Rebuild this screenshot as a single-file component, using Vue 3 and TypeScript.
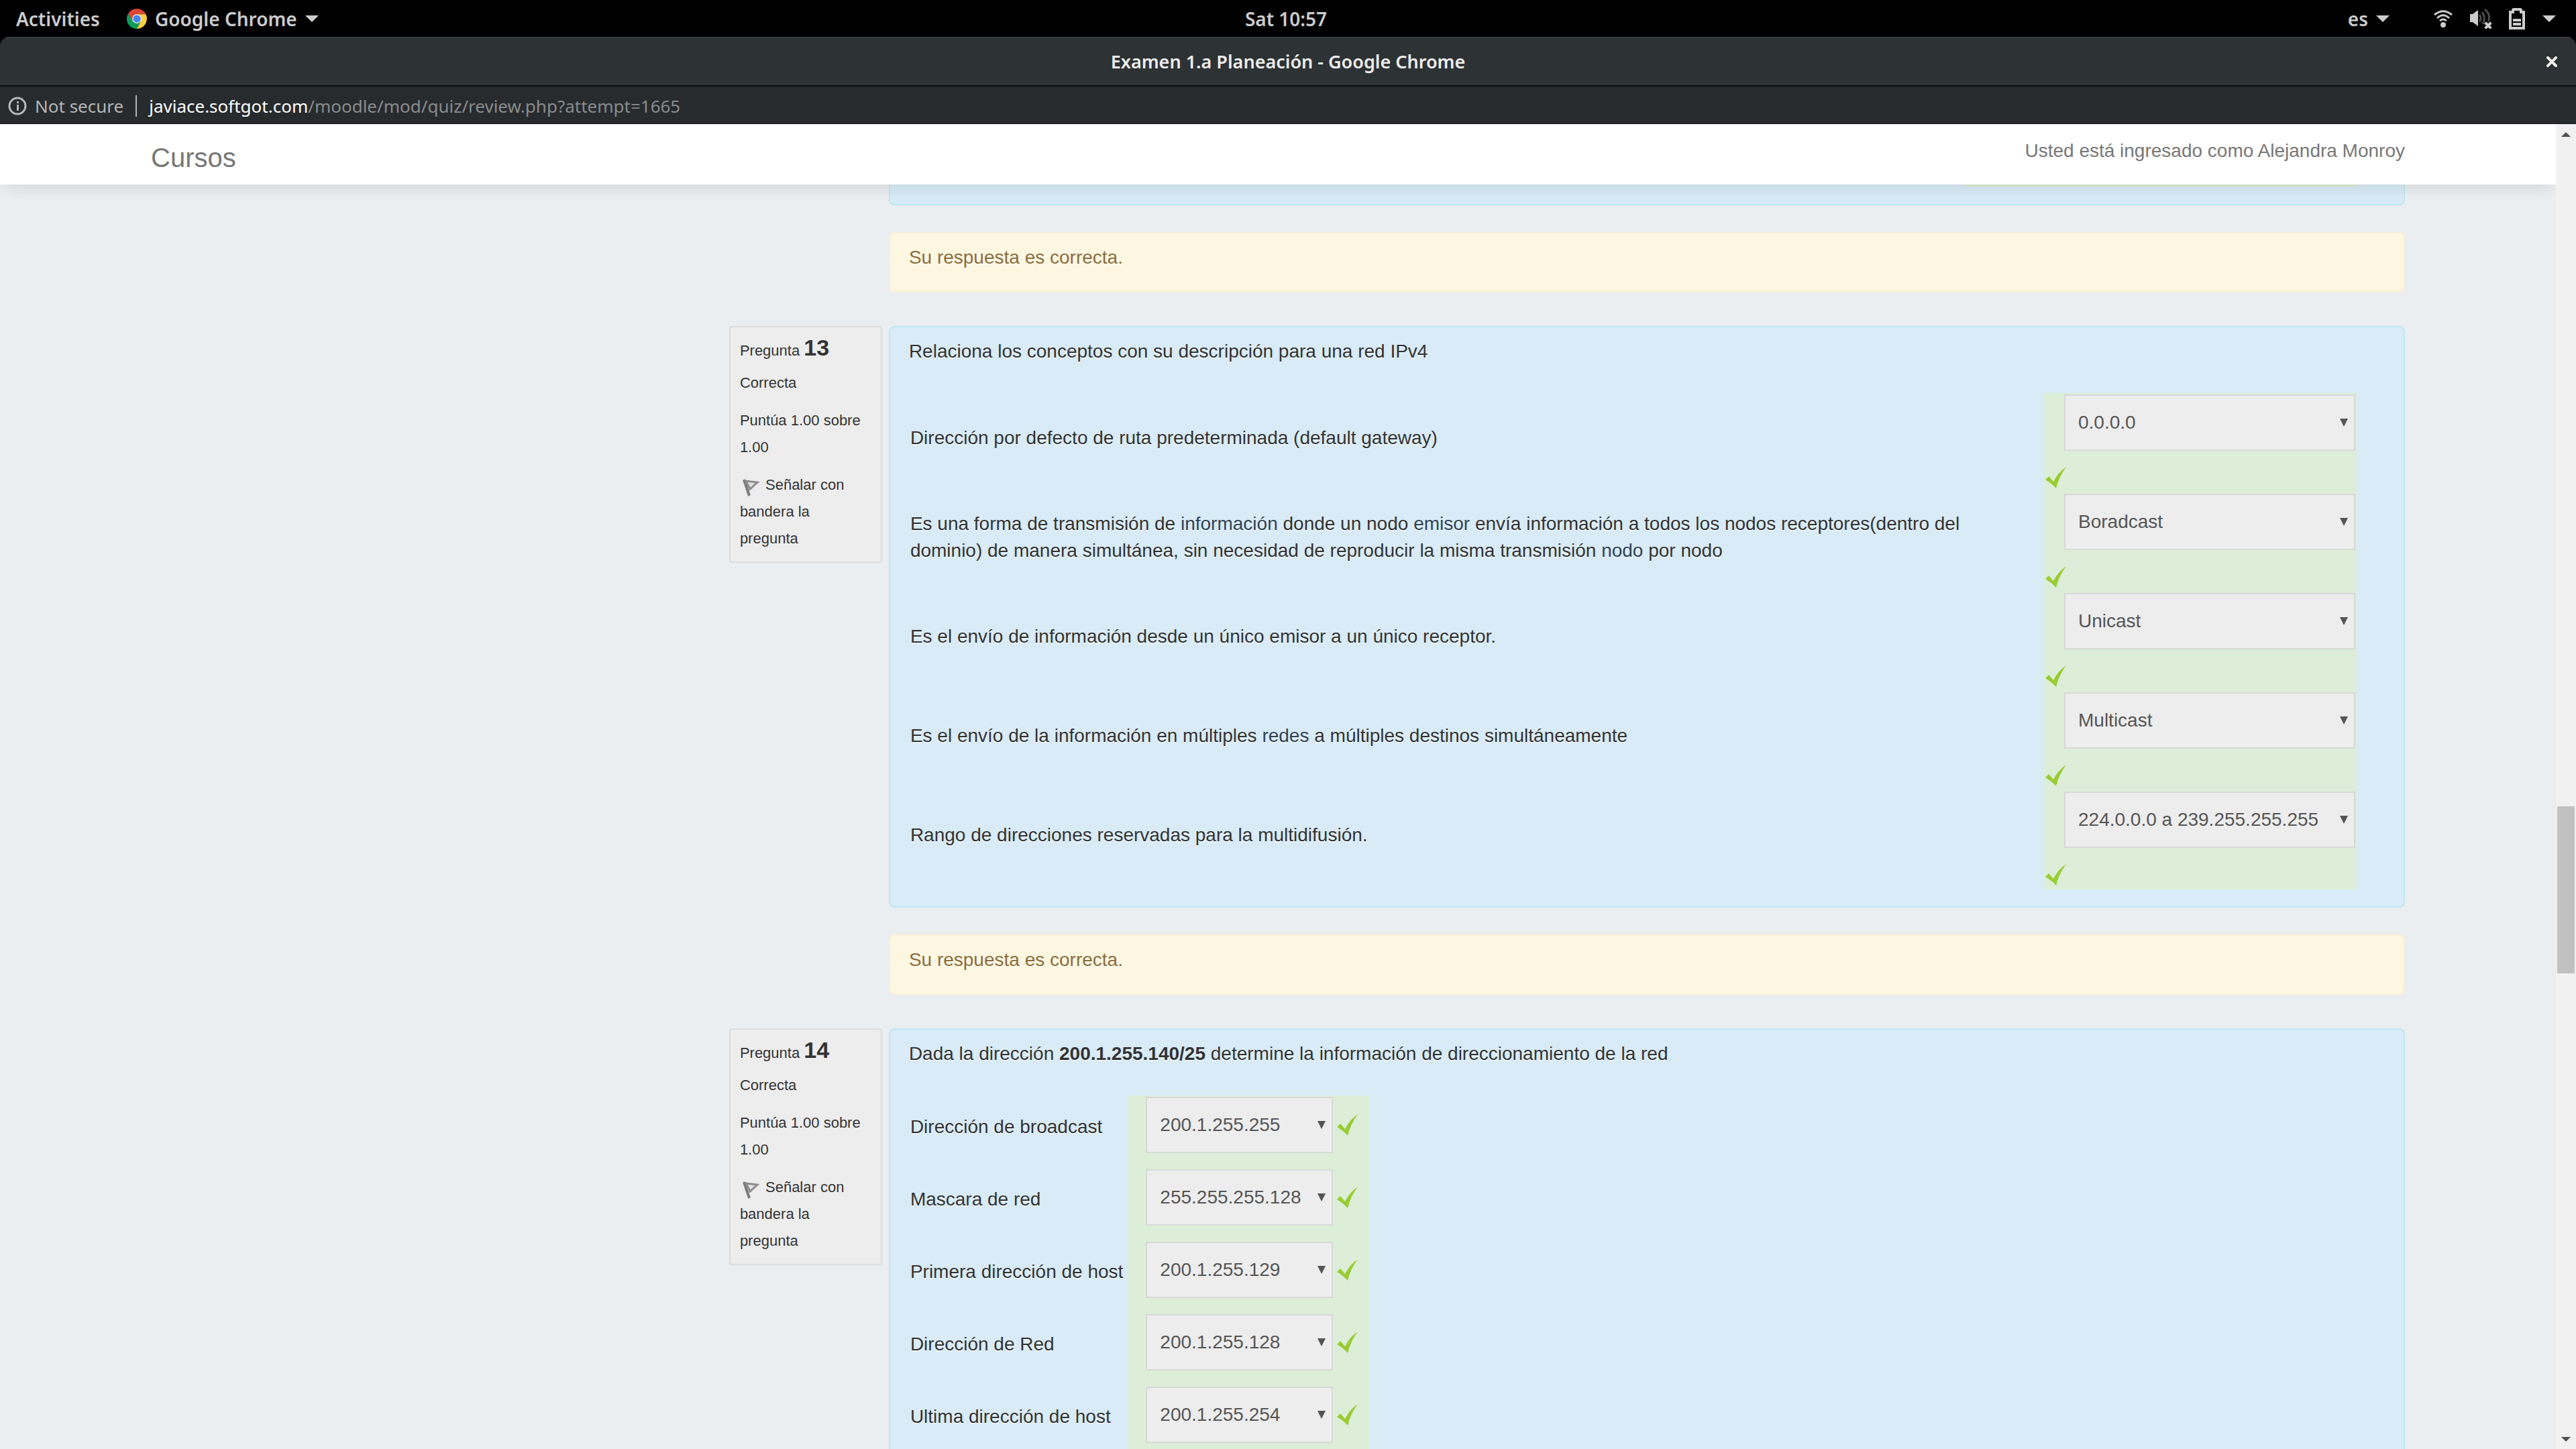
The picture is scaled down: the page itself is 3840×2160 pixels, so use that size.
<script setup lang="ts">
interface Segment {
  text: string
  link?: boolean
}

interface Match {
  id: string
  prompt: Segment[]
  answer: string
}

interface Question {
  number: number
  stacked: boolean
  intro: { text: string; strong?: boolean }[]
  matches: Match[]
  feedback?: string
}

const questions: Question[] = [
  {
    number: 13,
    stacked: true,
    intro: [{ text: 'Relaciona los conceptos con su descripción para una red IPv4' }],
    matches: [
      {
        id: 'q13-gateway',
        prompt: [{ text: 'Dirección por defecto de ruta predeterminada (default gateway)' }],
        answer: '0.0.0.0',
      },
      {
        id: 'q13-broadcast',
        prompt: [
          { text: 'Es una forma de transmisión de ' },
          { text: 'información', link: true },
          { text: ' donde un nodo ' },
          { text: 'emisor', link: true },
          {
            text: ' envía información a todos los nodos receptores(dentro del dominio) de manera simultánea, sin necesidad de reproducir la misma transmisión ',
          },
          { text: 'nodo', link: true },
          { text: ' por nodo' },
        ],
        answer: 'Boradcast',
      },
      {
        id: 'q13-unicast',
        prompt: [{ text: 'Es el envío de información desde un único emisor a un único receptor.' }],
        answer: 'Unicast',
      },
      {
        id: 'q13-multicast',
        prompt: [
          { text: 'Es el envío de la información en múltiples ' },
          { text: 'redes', link: true },
          { text: ' a múltiples destinos simultáneamente' },
        ],
        answer: 'Multicast',
      },
      {
        id: 'q13-range',
        prompt: [{ text: 'Rango de direcciones reservadas para la multidifusión.' }],
        answer: '224.0.0.0 a 239.255.255.255',
      },
    ],
    feedback: 'Su respuesta es correcta.',
  },
  {
    number: 14,
    stacked: false,
    intro: [
      { text: 'Dada la dirección ' },
      { text: '200.1.255.140/25', strong: true },
      { text: ' determine la información de direccionamiento de la red' },
    ],
    matches: [
      { id: 'q14-broadcast', prompt: [{ text: 'Dirección de broadcast' }], answer: '200.1.255.255' },
      { id: 'q14-mask', prompt: [{ text: 'Mascara de red' }], answer: '255.255.255.128' },
      { id: 'q14-first', prompt: [{ text: 'Primera dirección de host' }], answer: '200.1.255.129' },
      { id: 'q14-network', prompt: [{ text: 'Dirección de Red' }], answer: '200.1.255.128' },
      { id: 'q14-last', prompt: [{ text: 'Ultima dirección de host' }], answer: '200.1.255.254' },
    ],
  },
]
</script>

<template>
  <div class="desktop">
    <nav class="topbar">
      <div class="topbar-left">
        <button type="button">Activities</button>
        <button type="button" class="app-menu">
          <svg class="chrome-logo" viewBox="0 0 48 48" aria-hidden="true">
            <path d="M24 13H45.3A24 24 0 0 0 3.2 12L14 30Z" fill="#db4437" />
            <path d="M3.2 12A24 24 0 0 0 24 48L33.5 29.5 24 24 14.5 29.5Z" fill="#0f9d58" />
            <path d="M24 48A24 24 0 0 0 45.3 13H24L33.5 29.5Z" fill="#ffcd40" />
            <circle cx="24" cy="24" r="11" fill="#f1f1f1" />
            <circle cx="24" cy="24" r="9" fill="#4285f4" />
          </svg>
          Google Chrome
          <i class="caret"></i>
        </button>
      </div>
      <button type="button" class="clock">Sat 10:57</button>
      <div class="topbar-right">
        <button type="button" class="lang">es <i class="caret"></i></button>
        <button type="button" class="status" aria-label="Estado del sistema">
          <svg class="wifi" viewBox="0 0 28 26" fill="none" stroke="#ccc" stroke-width="3" aria-hidden="true">
            <path d="M1 7Q14-3.500 27 7" />
            <path d="M5 12Q14 3.500 23 12" />
            <path d="M9 16Q14 11.500 19 16" />
            <circle cx="14" cy="22" r="4" fill="#ccc" stroke="none" />
          </svg>
          <svg class="volume" viewBox="0 0 32 30" aria-hidden="true">
            <path d="M0 8H4L12 2V26L4 20H0Z" fill="#ccc" />
            <g fill="none" stroke="#4a4a4a" stroke-width="3">
              <path d="M14 9Q18 14 14 19" />
              <path d="M18 5Q24 13 19 23" />
              <path d="M22 1Q32 9 27 19" />
            </g>
            <path d="M24 22 30 28M30 22 24 28" stroke="#ccc" stroke-width="4" stroke-linecap="square" />
          </svg>
          <svg class="battery" viewBox="0 0 24 32" aria-hidden="true">
            <path d="M0 4H4V2L6 0H18L20 2V4H24V32H0ZM4 8V28H20V8H16V4H8V8Z" fill="#ccc" fill-rule="evenodd" />
            <path d="M6 16H18V20H6ZM6 22H18V26H6Z" fill="#ccc" />
          </svg>
          <i class="caret"></i>
        </button>
      </div>
    </nav>

    <div class="window">
      <header class="titlebar">
        <span class="window-title">Examen 1.a Planeación - Google Chrome</span>
        <button type="button" class="close" aria-label="Cerrar">
          <svg viewBox="0 0 16 16" aria-hidden="true">
            <path d="M2 2 14 14M14 2 2 14" stroke="#eeeeec" stroke-width="4" stroke-linecap="square" />
          </svg>
        </button>
      </header>

      <div class="addressbar">
        <svg class="info-icon" viewBox="0 0 28 28" aria-hidden="true">
          <circle cx="14" cy="14" r="12" fill="none" stroke="#b4b6b7" stroke-width="3" />
          <path d="M13 12H16V21H13ZM13 7H16V10H13Z" fill="#b4b6b7" />
        </svg>
        <span class="secure">Not secure</span>
        <span class="divider"></span>
        <span class="url"><b>javiace.softgot.com</b>/moodle/mod/quiz/review.php?attempt=1665</span>
      </div>

      <div class="viewport">
        <div class="page">
          <header class="site-header">
            <a href="#" class="brand">Cursos</a>
            <span class="user">Usted está ingresado como Alejandra Monroy</span>
          </header>

          <main class="quiz">
            <section class="question">
              <div class="body">
                <div class="formulation tail"><div class="tail-answers"></div></div>
                <div class="feedback">Su respuesta es correcta.</div>
              </div>
            </section>

            <section v-for="q in questions" :key="q.number" class="question">
              <aside class="info">
                <h3>Pregunta <b>{{ q.number }}</b></h3>
                <p class="state">Correcta</p>
                <p class="grade">Puntúa 1.00 sobre 1.00</p>
                <button type="button" class="flag">
                  <svg viewBox="0 0 32 32" aria-hidden="true">
                    <path d="M6 5 14 29" stroke="#7c7c7c" stroke-width="4" />
                    <path d="M9 7 26 9 15 19Z" fill="#e2e2e2" stroke="#8c8c8c" stroke-width="3" />
                  </svg>
                  Señalar con bandera la pregunta
                </button>
              </aside>
              <div class="body">
                <div class="formulation">
                  <p class="intro">
                    <template v-for="(part, i) in q.intro" :key="i"
                      ><strong v-if="part.strong">{{ part.text }}</strong
                      ><template v-else>{{ part.text }}</template></template
                    >
                  </p>
                  <table :class="['answers', q.stacked ? 'stacked' : 'inline']">
                    <tbody>
                      <tr v-for="m in q.matches" :key="m.id">
                        <td class="prompt">
                          <label :for="m.id"
                            ><template v-for="(part, i) in m.prompt" :key="i"
                              ><a v-if="part.link" href="#">{{ part.text }}</a
                              ><template v-else>{{ part.text }}</template></template
                            ></label
                          >
                        </td>
                        <td class="control">
                          <div class="control-row">
                            <span class="select">
                              <select :id="m.id" disabled>
                                <option>{{ m.answer }}</option>
                              </select>
                            </span>
                            <svg class="tick" viewBox="0 0 32 32" role="img" aria-label="Correcta">
                              <path d="M0 19 5 14 12 22Q19 8 31 0 20 15 16 32 10 25 0 19Z" fill="#9c3" />
                            </svg>
                          </div>
                        </td>
                      </tr>
                    </tbody>
                  </table>
                </div>
                <div v-if="q.feedback" class="feedback">{{ q.feedback }}</div>
              </div>
            </section>
          </main>
        </div>

        <div class="scrollbar">
          <button type="button" aria-label="Subir"><i class="up"></i></button>
          <div class="track">
            <div class="before"></div>
            <div class="thumb"></div>
            <div class="after"></div>
          </div>
          <button type="button" aria-label="Bajar"><i class="down"></i></button>
        </div>
      </div>
    </div>
  </div>
</template>

<style>
body {
  background: #000;
}
</style>

<style scoped>
* {
  box-sizing: border-box;
}

.desktop {
  display: flex;
  flex-direction: column;
  height: 100vh;
  overflow: hidden;
  background: #000;
  font-family: "Noto Sans", "Open Sans", sans-serif;
}

button {
  padding: 0;
  border: 0;
  background: none;
  color: inherit;
  font: inherit;
}

a {
  color: inherit;
  text-decoration: none;
}

.topbar {
  display: grid;
  grid-template-columns: 1fr auto 1fr;
  align-items: center;
  flex: none;
  height: 55px;
  padding: 0 30px 0 24px;
  color: #ccc;
  font-size: 28px;
  font-weight: 600;
  line-height: 36px;
}

.topbar-left,
.topbar-right,
.app-menu,
.lang,
.status {
  display: flex;
  align-items: center;
}

.topbar-left {
  gap: 40px;
}

.topbar-right {
  justify-content: flex-end;
  gap: 66px;
}

.app-menu,
.lang {
  gap: 12px;
}

.status {
  gap: 26px;
}

.chrome-logo {
  width: 30px;
  height: 30px;
}

.wifi {
  width: 28px;
  height: 26px;
}

.volume {
  width: 32px;
  height: 30px;
}

.battery {
  width: 24px;
  height: 32px;
}

.caret {
  width: 0;
  height: 0;
  border: 10px solid transparent;
  border-top-color: #ccc;
  border-bottom: 0;
}

.window {
  display: flex;
  flex: 1;
  flex-direction: column;
  min-height: 0;
  overflow: hidden;
  border-radius: 14px 14px 0 0;
}

.titlebar {
  display: grid;
  grid-template-columns: 1fr auto 1fr;
  align-items: center;
  flex: none;
  height: 74px;
  padding: 0 28px;
  border-top: 2px solid #394141;
  border-bottom: 2px solid #0b0e0f;
  background: #2d3235;
  color: #eeeeec;
}

.window-title {
  grid-column: 2;
  font-size: 27px;
  font-weight: 600;
  line-height: 36px;
}

.close {
  display: flex;
  justify-self: end;
}

.close svg {
  width: 16px;
  height: 16px;
}

.addressbar {
  display: flex;
  align-items: center;
  flex: none;
  height: 56px;
  padding: 4px 12px 0;
  border-bottom: 2px solid #1f2224;
  background: #272b2e;
  color: #898b8c;
  font-size: 26px;
  line-height: 36px;
}

.info-icon {
  width: 28px;
  height: 28px;
  margin-right: 12px;
}

.secure {
  color: #b4b6b7;
}

.divider {
  width: 2px;
  height: 32px;
  margin: 0 18px;
  background: #b4b6b7;
}

.url b {
  color: #fff;
  font-weight: 400;
}

.viewport {
  display: flex;
  flex: 1;
  min-height: 0;
  background: #eaeef1;
  color: #333;
  font-family: "Liberation Sans", Arial, sans-serif;
  font-size: 28px;
  line-height: 40px;
}

.page {
  flex: 1;
  min-width: 0;
  overflow: hidden;
}

.site-header {
  position: relative;
  z-index: 1;
  display: flex;
  justify-content: space-between;
  height: 90px;
  padding: 0 225px;
  background: #fff;
  box-shadow: 0 12px 20px -6px rgba(0, 0, 0, 0.09);
  color: #777;
}

.brand {
  padding: 30px 0 20px;
  font-size: 40px;
}

.user {
  padding: 20px 0;
}

.quiz {
  display: flex;
  flex-direction: column;
  gap: 50px;
  padding: 0 225px;
}

.question {
  display: flex;
  align-items: flex-start;
  justify-content: flex-end;
  gap: 10px;
}

.info {
  flex: none;
  width: 228px;
  padding: 10px 14px 14px;
  border: 2px solid #dcdcdc;
  border-radius: 4px;
  background: #ededed;
  font-size: 22px;
}

.info h3 {
  margin: 0 0 8px;
  font-size: 22px;
  font-weight: 400;
}

.info h3 b {
  font-size: 34px;
}

.info p {
  margin: 0 0 16px;
}

.flag {
  display: block;
  text-align: left;
}

.flag svg {
  width: 32px;
  height: 32px;
  vertical-align: -12px;
}

.body {
  flex: none;
  width: calc((100% - 24px) * 0.6775);
}

.formulation,
.feedback {
  border: 2px solid #bce8f1;
  border-radius: 8px;
  text-shadow: 0 2px 0 rgba(255, 255, 255, 0.5);
}

.formulation {
  padding: 16px 70px 25px 28px;
  background: #d8ebf7;
}

.tail {
  padding-top: 0;
  border-top: 0;
  border-radius: 0 0 8px 8px;
}

.tail-answers {
  width: 584px;
  height: 4px;
  margin-left: auto;
  background: #dceed7;
}

.feedback {
  height: 90px;
  margin-top: 40px;
  padding: 16px 28px;
  border-color: #fbeed5;
  background: #fdf7e2;
  color: #8a6d3b;
}

.intro {
  margin: 0 0 42px;
}

.answers {
  border-collapse: collapse;
}

.answers td {
  padding: 0;
}

.answers .prompt {
  padding: 0 6px 14px 2px;
  vertical-align: middle;
}

.answers a {
  color: #2f4356;
}

.answers .control {
  background: #dceed7;
}

.control-row {
  display: flex;
}

.stacked {
  width: 100%;
}

.stacked .prompt {
  padding-right: 100px;
}

.stacked .control {
  width: 466px;
}

.stacked .control-row {
  flex-direction: column;
  gap: 24px;
  padding: 2px 2px 6px;
}

.stacked .select {
  margin-left: 28px;
}

.inline .control-row {
  align-items: flex-start;
  gap: 6px;
  padding: 2px 16px 22px 28px;
}

.inline .tick {
  margin-top: 26px;
}

.select {
  position: relative;
  display: block;
}

.select::after {
  content: "";
  position: absolute;
  top: 36px;
  right: 11px;
  border: 6px solid transparent;
  border-top: 12px solid #555;
  border-bottom: 0;
}

select {
  display: block;
  width: 100%;
  height: 84px;
  margin: 0;
  padding: 0 40px 0 19px;
  border: 2px solid #d8d8d8;
  border-radius: 0;
  background: #ededed;
  color: #555;
  font: inherit;
  appearance: none;
  opacity: 1;
}

.inline select {
  width: 279px;
}

.tick {
  width: 32px;
  height: 32px;
}

.scrollbar {
  display: flex;
  flex: none;
  flex-direction: column;
  width: 30px;
  background: #f1f1f1;
}

.scrollbar button {
  display: flex;
  align-items: center;
  justify-content: center;
  height: 30px;
}

.up,
.down {
  border: 7px solid transparent;
}

.up {
  border-top: 0;
  border-bottom-color: #505050;
}

.down {
  border-bottom: 0;
  border-top-color: #505050;
}

.track {
  display: flex;
  flex: 1;
  flex-direction: column;
  padding: 0 2px;
}

.before {
  flex: 987;
}

.thumb {
  flex: 249;
  background: #c1c1c1;
}

.after {
  flex: 679;
}
</style>
